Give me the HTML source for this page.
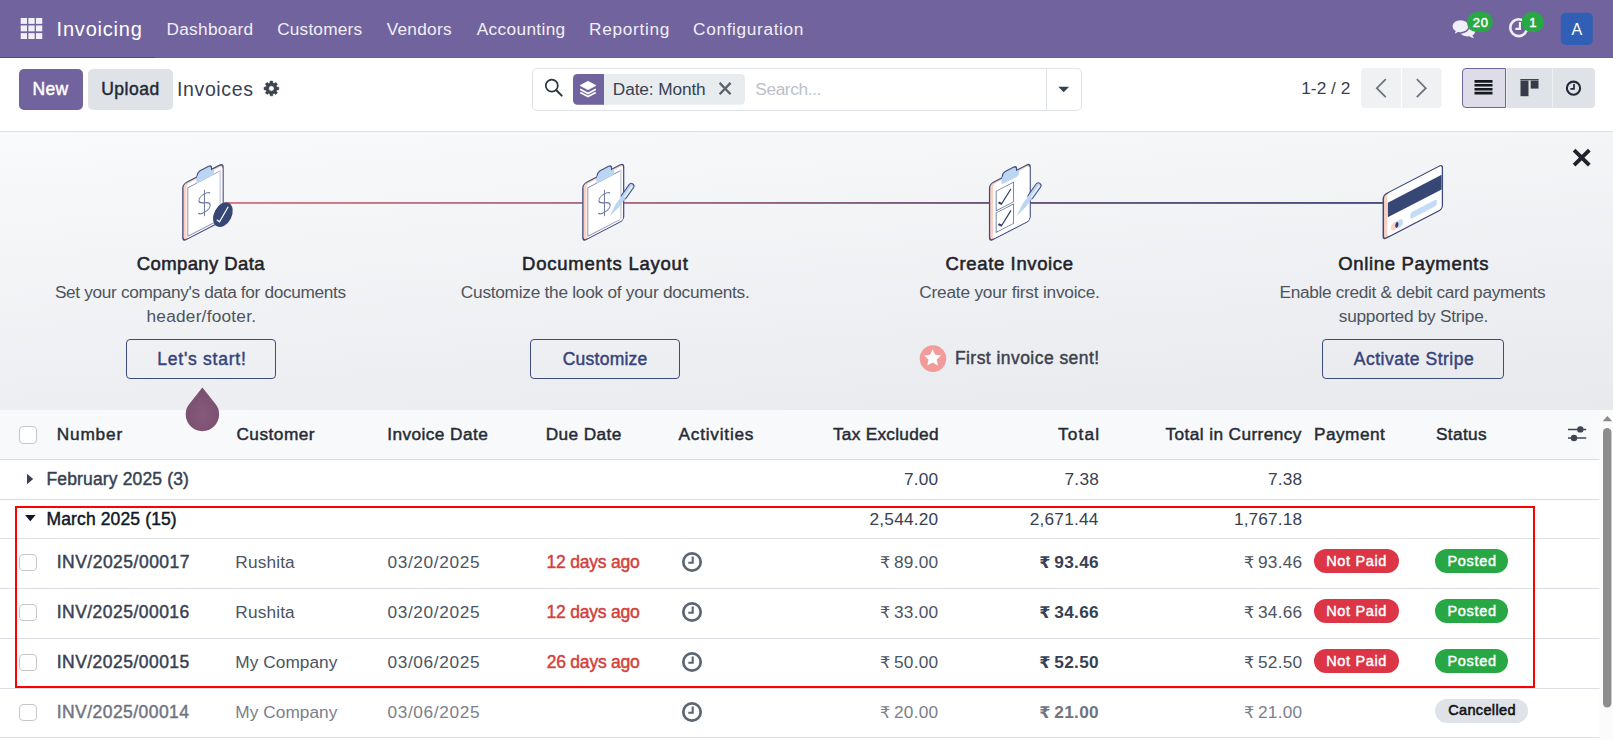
<!DOCTYPE html>
<html lang="en">
<head>
<meta charset="utf-8">
<title>Odoo - Invoices</title>
<style>
*{box-sizing:border-box;margin:0;padding:0}
html,body{width:1613px;height:740px;overflow:hidden;background:#fff}
body{font-family:"Liberation Sans",sans-serif;position:relative;color:#374151}
.sec{position:absolute;left:0;width:1613px}
.t{position:absolute;white-space:nowrap;line-height:1}
.abs{position:absolute}
#nav{top:0;height:58px;background:#71639e;border-bottom:1px solid #695c97}
#cp{top:58px;height:74px;background:#fff;border-bottom:1px solid #dce0e4}
#bn{top:132px;height:278px;background:linear-gradient(175.8deg,#f9fafb,#e7e9ed)}
#th{top:410px;height:50px;width:1600px;background:#f8f9fb;border-bottom:1px solid #d8dbe0}
.row{width:1600px;background:#fff;border-bottom:1px solid #dcdfe4}
.btn{position:absolute;border-radius:5px}
.cb{position:absolute;left:19px;width:18px;height:18px;border:1px solid #c6c7c9;border-radius:4px;background:#fff}
.badge{position:absolute;height:23.5px;border-radius:12px}
.ob{position:absolute;top:207px;height:40px;border:1px solid #3c4b80;border-radius:4px}
</style>
</head>
<body>

<!-- ================= NAVBAR ================= -->
<div class="sec" id="nav">
<svg class="abs" style="left:0;top:0" width="1613" height="58" viewBox="0 0 1613 58">
 <g fill="#f1eff7">
  <rect x="20.7" y="18" width="6.3" height="5.9"/><rect x="28.35" y="18" width="6.3" height="5.9"/><rect x="35.95" y="18" width="6.3" height="5.9"/>
  <rect x="20.7" y="25.45" width="6.3" height="5.9"/><rect x="28.35" y="25.45" width="6.3" height="5.9"/><rect x="35.95" y="25.45" width="6.3" height="5.9"/>
  <rect x="20.7" y="33.1" width="6.3" height="5.9"/><rect x="28.35" y="33.1" width="6.3" height="5.9"/><rect x="35.95" y="33.1" width="6.3" height="5.9"/>
 </g>
 <!-- messaging -->
 <g fill="#f0eef6">
  <path d="M1467.700 27c4.100 0 7.400 2.100 7.400 4.700 0 1.500-1.100 2.800-2.800 3.700 0.500 1 1.200 1.800 2.100 2.400-2 0-3.700-0.500-5-1.500-0.600 0.100-1.100 0.100-1.700 0.100-4.100 0-7.400-2.100-7.400-4.700s3.300-4.700 7.400-4.700z"/>
  <path stroke="#71639e" stroke-width="1.500" d="M1460.500 19.400c-4.800 0-8.700 3-8.700 6.800 0 2.100 1.200 3.900 3.100 5.200-0.300 1.200-1 2.200-2 3 2.200 0 4.100-0.600 5.600-1.700 0.600 0.100 1.300 0.200 2 0.200 4.800 0 8.700-3 8.700-6.700s-3.900-6.800-8.700-6.800z"/>
 </g>
 <rect x="1466.800" y="12" width="26.100" height="20.100" rx="10.050" fill="#28a745"/>
 <!-- activity clock -->
 <circle cx="1518.700" cy="27.700" r="8.450" fill="none" stroke="#f0eef6" stroke-width="2.600"/>
 <path d="M1519.900 22v6.800h-4.500" fill="none" stroke="#f0eef6" stroke-width="2.200"/>
 <rect x="1521.500" y="12" width="22.500" height="20.100" rx="10.050" fill="#28a745"/>
 <!-- avatar -->
 <rect x="1560.800" y="12.800" width="32" height="32.200" rx="5" fill="#305fb5"/>
</svg>
<div class="abs" style="left:0;top:57px;width:155px;height:1px;background:#54497f"></div>
<span class="t" style="left:56.55px;top:19.00px;font-size:20px;color:#fff;letter-spacing:0.800px;">Invoicing</span>
<span class="t" style="left:166.50px;top:21.00px;font-size:17.25px;color:#f1eff7;letter-spacing:0.281px;">Dashboard</span>
<span class="t" style="left:277.15px;top:21.00px;font-size:17.25px;color:#f1eff7;letter-spacing:0.187px;">Customers</span>
<span class="t" style="left:386.65px;top:21.00px;font-size:17.25px;color:#f1eff7;letter-spacing:0.283px;">Vendors</span>
<span class="t" style="left:476.70px;top:21.00px;font-size:17.25px;color:#f1eff7;letter-spacing:0.350px;">Accounting</span>
<span class="t" style="left:589.00px;top:21.00px;font-size:17.25px;color:#f1eff7;letter-spacing:0.706px;">Reporting</span>
<span class="t" style="left:693.05px;top:21.00px;font-size:17.25px;color:#f1eff7;letter-spacing:0.646px;">Configuration</span>
<span class="t" style="left:1472.75px;top:15.50px;font-size:13px;-webkit-text-stroke:0.45px;color:#fff;letter-spacing:0.850px;">20</span>
<span class="t" style="left:1529.20px;top:15.50px;font-size:13px;-webkit-text-stroke:0.45px;color:#fff;letter-spacing:0.000px;">1</span>
<span class="t" style="left:1571.60px;top:22.00px;font-size:16px;color:#fff;letter-spacing:0.000px;">A</span>
</div>

<!-- ================= CONTROL PANEL ================= -->
<div class="sec" id="cp">
<div class="btn" style="left:19px;top:11px;width:64px;height:41px;background:#71639e"></div>
<div class="btn" style="left:88px;top:11px;width:85px;height:41px;background:#dfe2e6"></div>
<svg class="abs" style="left:0;top:0" width="1613" height="74" viewBox="0 58 1613 74">
 <!-- gear -->
 <path fill="#3b4350" fill-rule="evenodd" stroke="#3b4350" stroke-width="0.6" stroke-linejoin="round" d="M269.90 83.05L270.17 81.10L272.63 81.10L272.90 83.05L274.16 83.58L275.73 82.38L277.47 84.12L276.27 85.69L276.80 86.95L278.75 87.22L278.75 89.68L276.80 89.95L276.27 91.21L277.47 92.78L275.73 94.52L274.16 93.32L272.90 93.85L272.63 95.80L270.17 95.80L269.90 93.85L268.64 93.32L267.07 94.52L265.33 92.78L266.53 91.21L266.00 89.95L264.05 89.68L264.05 87.22L266.00 86.95L266.53 85.69L265.33 84.12L267.07 82.38L268.64 83.58ZM268.65 88.45a2.75 2.75 0 1 0 5.5 0a2.75 2.75 0 1 0 -5.5 0Z"/>
 <!-- search box -->
 <rect x="532.500" y="68.500" width="549" height="42" rx="4.500" fill="#fff" stroke="#dfe3e7"/>
 <path d="M1046.500 69v41" stroke="#dfe3e7"/>
 <circle cx="551.800" cy="85.700" r="6" fill="none" stroke="#2b3340" stroke-width="1.700"/>
 <path d="M556.300 90.300l5.400 5.300" stroke="#2b3340" stroke-width="2" stroke-linecap="round"/>
 <!-- facet -->
 <rect x="573" y="74" width="172" height="30.800" rx="4.500" fill="#e9ecef"/>
 <path d="M577.500 74h26.500v30.800h-26.500a4.500 4.500 0 0 1-4.500-4.500v-21.800a4.500 4.500 0 0 1 4.500-4.500z" fill="#71639e"/>
 <g fill="none" stroke="#fff" stroke-width="1.700">
  <path d="M588 81.200l8 4.300-8 4.300-8-4.300z" fill="#fff" stroke-width="0.600"/>
  <path d="M580.200 89.300l7.800 4.200 7.800-4.200"/>
  <path d="M580.200 92.400l7.800 4.200 7.800-4.200"/>
 </g>
 <path d="M719.600 82.900l11 11.400M730.600 82.900l-11 11.400" stroke="#59626e" stroke-width="2.300"/>
 <path d="M1058.300 86.800h10.800l-5.400 5.500z" fill="#374151"/>
 <!-- pager -->
 <path d="M1365 68h36v40h-36a4 4 0 0 1-4-4v-32a4 4 0 0 1 4-4z" fill="#f0f1f3"/>
 <path d="M1402 68h35.600a4 4 0 0 1 4 4v32a4 4 0 0 1-4 4h-35.600z" fill="#f0f1f3"/>
 <path d="M1385.800 79.200l-9 9 9 9M1416.800 79.200l9 9-9 9" fill="none" stroke="#6b7080" stroke-width="1.700"/>
 <!-- view switcher -->
 <path d="M1466 68.500h39.500v39h-39.500a3.500 3.500 0 0 1-3.500-3.500v-32a3.500 3.500 0 0 1 3.500-3.500z" fill="#dfdcea" stroke="#71639e"/>
 <rect x="1506.500" y="68" width="45.500" height="40" fill="#dfe2e6"/>
 <path d="M1552.500 68h38.500a4 4 0 0 1 4 4v32a4 4 0 0 1-4 4h-38.500z" fill="#dfe2e6"/>
 <path d="M1474.500 81.400h18M1474.500 85.300h18M1474.500 89.200h18M1474.500 93.100h18" stroke="#15181e" stroke-width="2.600"/>
 <path d="M1520.300 79.700h18.400" stroke="#1f2937" stroke-width="1.100"/>
 <rect x="1520.500" y="80.600" width="8" height="15.600" fill="#343b49"/><rect x="1530.700" y="80.600" width="7.800" height="8" fill="#343b49"/>
 <circle cx="1573.500" cy="88.200" r="6.600" fill="none" stroke="#1f2937" stroke-width="2.100"/>
 <path d="M1574 84v4.800h-3.600" fill="none" stroke="#1f2937" stroke-width="1.700"/>
</svg>
<span class="t" style="left:32.40px;top:23.00px;font-size:17.5px;-webkit-text-stroke:0.45px;color:#fff;letter-spacing:0.350px;">New</span>
<span class="t" style="left:101.15px;top:23.00px;font-size:17.5px;-webkit-text-stroke:0.45px;color:#1f2937;letter-spacing:0.520px;">Upload</span>
<span class="t" style="left:176.95px;top:22.00px;font-size:19.5px;color:#374151;letter-spacing:0.643px;">Invoices</span>
<span class="t" style="left:612.80px;top:23.00px;font-size:17.25px;color:#374151;letter-spacing:-0.105px;">Date: Month</span>
<span class="t" style="left:755.35px;top:23.00px;font-size:17.25px;color:#bcc0c9;letter-spacing:-0.394px;">Search...</span>
<span class="t" style="left:1301.25px;top:22.00px;font-size:17.25px;color:#374151;letter-spacing:0.025px;">1-2 / 2</span>
</div>

<!-- ================= ONBOARDING BANNER ================= -->
<div class="sec" id="bn">
<svg class="abs" style="left:0;top:0" width="1613" height="278" viewBox="0 132 1613 278">
 <defs>
  <linearGradient id="ln" gradientUnits="userSpaceOnUse" x1="228" y1="0" x2="1383" y2="0">
   <stop offset="0" stop-color="#d0697a"/><stop offset="0.35" stop-color="#9c5d77"/><stop offset="0.68" stop-color="#5a4369"/><stop offset="1" stop-color="#333c6c"/>
  </linearGradient>
 </defs>
 <rect x="226" y="202.100" width="1158" height="1.700" fill="url(#ln)"/>

 <!-- step 1 : clipboard + check -->
 <g transform="matrix(1,-0.52,0,1,182.85,184.3)">
  <rect x="0" y="0" width="40.2" height="57" rx="3.6" fill="#fad1c3" stroke="#3f4d80" stroke-width="1.3"/>
  <rect x="3.6" y="2.1" width="36" height="54.3" rx="2.4" fill="#fff"/>
  <rect x="36.3" y="5" width="2" height="49.5" fill="#d3d8e6"/>
  <rect x="5" y="6" width="31.4" height="48.6" fill="#fff"/>
  <path d="M5 54.6V6H36.4M5 54.6H36.4" fill="none" stroke="#7f8bb0" stroke-width="0.9"/>
  <path d="M14.3 1V-1.1Q14.3 -4.7 17.9 -4.7H25.1Q28.7 -4.7 28.7 -1.1V1" fill="#bcd6f2" stroke="#3f4d80" stroke-width="1.2"/>
  <path d="M14.3 -0.8H28.1V0.7H30.2Q31.2 0.7 31.2 1.7V4.4Q31.2 6.6 29 6.6H15.7Q13.5 6.6 13.5 4.4V0.7H14.3Z" fill="#bcd6f2"/>
  <g transform="translate(21.6,29.9) scale(1.1)" fill="none" stroke="#6a779e" stroke-width="0.9">
   <path d="M5-6.3C3.3-9-5-9.3-5-4.5C-5 0 5.2-0.500 5.2 4.5C5.2 9.6-3.7 9.4-5.6 6.300M0-12V12"/>
  </g>
 </g>
 <ellipse cx="222.9" cy="214.7" rx="8.8" ry="13.1" transform="rotate(27 222.9 214.7)" fill="#364775"/>
 <path d="M216.8 219.7l2.700 2.100 8.700-15.100" fill="none" stroke="#fff" stroke-width="1.2"/>

 <!-- step 2 : clipboard + pen -->
 <g transform="matrix(1,-0.52,0,1,582.85,184.3)">
  <rect x="0" y="0" width="40.8" height="57" rx="3.6" fill="#fad1c3" stroke="#3f4d80" stroke-width="1.3"/>
  <rect x="3.6" y="2.1" width="36.6" height="54.3" rx="2.4" fill="#fff"/>
  <rect x="36.9" y="5" width="2" height="49.5" fill="#d3d8e6"/>
  <rect x="5" y="6" width="32" height="48.6" fill="#fff"/>
  <path d="M5 54.6V6H37M5 54.6H37" fill="none" stroke="#7f8bb0" stroke-width="0.9"/>
  <path d="M14.3 1V-1.1Q14.3 -4.7 17.9 -4.7H25.1Q28.7 -4.7 28.7 -1.1V1" fill="#bcd6f2" stroke="#3f4d80" stroke-width="1.2"/>
  <path d="M14.3 -0.8H28.1V0.7H30.2Q31.2 0.7 31.2 1.7V4.4Q31.2 6.6 29 6.6H15.7Q13.5 6.6 13.5 4.4V0.7H14.3Z" fill="#bcd6f2"/>
  <g transform="translate(21.6,29.9) scale(1.1)" fill="none" stroke="#6a779e" stroke-width="0.9">
   <path d="M5-6.3C3.3-9-5-9.3-5-4.5C-5 0 5.2-0.500 5.2 4.5C5.2 9.6-3.7 9.4-5.6 6.300M0-12V12"/>
  </g>
 </g>
 <path d="M624.2 196.1L631.3 186.2" stroke="#3f4d80" stroke-width="6.4" stroke-linecap="round"/>
 <path d="M609.8 216.2L619.1 207.0L633.1 187.5A2.2 2.2 0 0 0 629.5 184.9L615.5 204.4Z" fill="#bcd6f2"/>
 <path d="M624.9 196.6L632.0 186.7" stroke="#eef4fc" stroke-width="1.3" stroke-linecap="round"/>

 <!-- step 3 : checklist + pen -->
 <g transform="matrix(1,-0.52,0,1,989.55,184.3)">
  <rect x="0" y="0" width="40.6" height="57" rx="3.6" fill="#fad1c3" stroke="#3f4d80" stroke-width="1.3"/>
  <rect x="3.6" y="2.1" width="36.4" height="54.3" rx="2.4" fill="#fff"/>
  <path d="M12.7 1V-1.1Q12.7 -4.7 16.3 -4.7H23.5Q27.1 -4.7 27.1 -1.1V1" fill="#bcd6f2" stroke="#3f4d80" stroke-width="1.2"/>
  <path d="M12.7 -0.8H26.5V0.7H28.6Q29.6 0.7 29.6 1.7V4.4Q29.6 6.6 27.4 6.6H14.1Q11.9 6.6 11.9 4.4V0.7H12.7Z" fill="#bcd6f2"/>
  <rect x="6.6" y="10.3" width="17.5" height="19.6" fill="#fff" stroke="#5a6894" stroke-width="0.8"/>
  <rect x="6.6" y="32" width="17.5" height="19.6" fill="#fff" stroke="#5a6894" stroke-width="0.8"/>
  <path d="M8.9 22.7l3.100 3.200l9.400-10.200M8.9 44.4l3.100 3.200l9.400-10.200" fill="none" stroke="#2f3d6d" stroke-width="1.6"/>
 </g>
 <path d="M1030.8 196.2L1038.3 185.6" stroke="#3f4d80" stroke-width="6.4" stroke-linecap="round"/>
 <path d="M1016.6 216.2L1026.0 206.8L1040.1 186.9A2.2 2.2 0 0 0 1036.5 184.3L1022.4 204.2Z" fill="#bcd6f2"/>
 <path d="M1031.5 196.7L1039.0 186.1" stroke="#eef4fc" stroke-width="1.3" stroke-linecap="round"/>

 <!-- step 4 : credit card -->
 <g transform="matrix(1,-0.52,0,1,1383.300,195.300)">
  <rect x="0" y="0" width="59" height="44.300" rx="3" fill="#fad1c3" stroke="#3d4b7e" stroke-width="1.500"/>
  <rect x="4" y="0.600" width="54.300" height="43" rx="2.300" fill="#fff"/>
  <rect x="4.500" y="9.800" width="53.800" height="14.600" fill="#364775"/>
  <rect x="27" y="31.500" width="26.500" height="6.600" rx="2" fill="#c3dcf5"/>
  <circle cx="15.800" cy="36.600" r="3.900" fill="#c3dcf5"/>
  <circle cx="11.300" cy="36.600" r="3.900" fill="#fbd5c9"/>
  <path d="M13.550 33.400a3.900 3.900 0 0 1 0 6.400a3.900 3.900 0 0 1 0-6.400z" fill="#2f3d6d"/>
 </g>

 <!-- close -->
 <path d="M1574.100 150.200l15.200 14.900M1589.300 150.200l-15.200 14.900" stroke="#20242a" stroke-width="3.900"/>
 <!-- star -->
 <circle cx="933" cy="358.600" r="13.300" fill="#f29b9b"/>
 <g transform="translate(932.600,358) scale(1.22)"><path d="M0-7.200l2.100 4.500 4.900 0.550-3.650 3.350 1 4.850-4.350-2.450-4.350 2.450 1-4.850-3.650-3.350 4.900-0.550z" fill="#fff"/></g>
</svg>
<div class="ob" style="left:126px;width:150px"></div>
<div class="ob" style="left:530px;width:150px"></div>
<div class="ob" style="left:1322px;width:182px"></div>
<span class="t" style="left:136.70px;top:123.00px;font-size:18.5px;-webkit-text-stroke:0.55px;color:#1f2329;letter-spacing:0.400px;">Company Data</span>
<span class="t" style="left:522.00px;top:123.00px;font-size:18.5px;-webkit-text-stroke:0.55px;color:#1f2329;letter-spacing:0.770px;">Documents Layout</span>
<span class="t" style="left:945.60px;top:123.00px;font-size:18.5px;-webkit-text-stroke:0.55px;color:#1f2329;letter-spacing:0.623px;">Create Invoice</span>
<span class="t" style="left:1338.15px;top:123.00px;font-size:18.5px;-webkit-text-stroke:0.55px;color:#1f2329;letter-spacing:0.671px;">Online Payments</span>
<span class="t" style="left:54.95px;top:152.00px;font-size:17.25px;color:#4d545d;letter-spacing:-0.342px;">Set your company's data for documents</span>
<span class="t" style="left:146.55px;top:176.00px;font-size:17.25px;color:#4d545d;letter-spacing:0.227px;">header/footer.</span>
<span class="t" style="left:460.85px;top:152.00px;font-size:17.25px;color:#4d545d;letter-spacing:-0.257px;">Customize the look of your documents.</span>
<span class="t" style="left:919.35px;top:152.00px;font-size:17.25px;color:#4d545d;letter-spacing:-0.218px;">Create your first invoice.</span>
<span class="t" style="left:1279.60px;top:152.00px;font-size:17.25px;color:#4d545d;letter-spacing:-0.326px;">Enable credit &amp; debit card payments</span>
<span class="t" style="left:1338.80px;top:176.00px;font-size:17.25px;color:#4d545d;letter-spacing:-0.255px;">supported by Stripe.</span>
<span class="t" style="left:157.30px;top:219.00px;font-size:17.5px;-webkit-text-stroke:0.45px;color:#34447a;letter-spacing:0.755px;">Let's start!</span>
<span class="t" style="left:562.70px;top:219.00px;font-size:17.5px;-webkit-text-stroke:0.45px;color:#34447a;letter-spacing:0.250px;">Customize</span>
<span class="t" style="left:1353.80px;top:219.00px;font-size:17.5px;-webkit-text-stroke:0.45px;color:#34447a;letter-spacing:0.507px;">Activate Stripe</span>
<span class="t" style="left:954.90px;top:218.00px;font-size:17.5px;-webkit-text-stroke:0.45px;color:#3b424d;letter-spacing:0.450px;">First invoice sent!</span>
</div>

<!-- ================= LIST ================= -->
<div class="sec" id="th">
<div class="cb" style="left:19.25px;top:16px;width:17.5px;height:17.5px"></div>
<svg class="abs" style="left:1564px;top:12px" width="28" height="26" viewBox="1564 422 28 26">
 <path d="M1568 429.400h18.200M1568 438h18.200" stroke="#3f4652" stroke-width="1.500"/>
 <circle cx="1580.300" cy="429.400" r="3.200" fill="#3f4652"/><circle cx="1574" cy="438" r="3.200" fill="#3f4652"/>
</svg>
<span class="t" style="left:56.80px;top:16.00px;font-size:17.25px;-webkit-text-stroke:0.45px;color:#262b33;letter-spacing:0.800px;">Number</span>
<span class="t" style="left:236.45px;top:16.00px;font-size:17.25px;-webkit-text-stroke:0.45px;color:#262b33;letter-spacing:0.479px;">Customer</span>
<span class="t" style="left:387.30px;top:16.00px;font-size:17.25px;-webkit-text-stroke:0.45px;color:#262b33;letter-spacing:0.414px;">Invoice Date</span>
<span class="t" style="left:545.70px;top:16.00px;font-size:17.25px;-webkit-text-stroke:0.45px;color:#262b33;letter-spacing:0.386px;">Due Date</span>
<span class="t" style="left:678.60px;top:16.00px;font-size:17.25px;-webkit-text-stroke:0.45px;color:#262b33;letter-spacing:0.756px;">Activities</span>
<span class="t" style="left:832.90px;top:16.00px;font-size:17.25px;-webkit-text-stroke:0.45px;color:#262b33;letter-spacing:0.282px;">Tax Excluded</span>
<span class="t" style="left:1058.00px;top:16.00px;font-size:17.25px;-webkit-text-stroke:0.45px;color:#262b33;letter-spacing:1.188px;">Total</span>
<span class="t" style="left:1165.60px;top:16.00px;font-size:17.25px;-webkit-text-stroke:0.45px;color:#262b33;letter-spacing:0.394px;">Total in Currency</span>
<span class="t" style="left:1313.95px;top:16.00px;font-size:17.25px;-webkit-text-stroke:0.45px;color:#262b33;letter-spacing:0.475px;">Payment</span>
<span class="t" style="left:1435.95px;top:16.00px;font-size:17.25px;-webkit-text-stroke:0.45px;color:#262b33;letter-spacing:0.370px;">Status</span>
</div>
<div class="sec row" id="g1" style="top:460px;height:40px"><svg class="abs" style="left:24px;top:10px" width="14" height="18" viewBox="24 470 14 18"><path d="M27 473.800l6.200 5.200-6.200 5.200z" fill="#374151"/></svg>
<span class="t" style="left:46.50px;top:11.00px;font-size:17.5px;-webkit-text-stroke:0.45px;color:#374151;letter-spacing:0.144px;">February 2025 (3)</span>
<span class="t" style="left:904.05px;top:11.00px;font-size:17.25px;color:#374151;letter-spacing:0.150px;">7.00</span>
<span class="t" style="left:1064.55px;top:11.00px;font-size:17.25px;color:#374151;letter-spacing:0.233px;">7.38</span>
<span class="t" style="left:1267.95px;top:11.00px;font-size:17.25px;color:#374151;letter-spacing:0.233px;">7.38</span></div>
<div class="sec row" id="g2" style="top:500px;height:39px"><svg class="abs" style="left:22px;top:11px" width="18" height="14" viewBox="22 511 18 14"><path d="M25 515h10.600l-5.300 6.300z" fill="#111827"/></svg>
<span class="t" style="left:46.50px;top:11.00px;font-size:17.5px;-webkit-text-stroke:0.45px;color:#111827;letter-spacing:0.129px;">March 2025 (15)</span>
<span class="t" style="left:869.55px;top:11.00px;font-size:17.25px;color:#374151;letter-spacing:0.207px;">2,544.20</span>
<span class="t" style="left:1029.75px;top:11.00px;font-size:17.25px;color:#374151;letter-spacing:0.214px;">2,671.44</span>
<span class="t" style="left:1233.95px;top:11.00px;font-size:17.25px;color:#374151;letter-spacing:0.136px;">1,767.18</span></div>
<div class="sec row" id="r1" style="top:539px;height:50px"><div class="cb" style="left:19.25px;top:15.250px;width:17.5px;height:17px"></div>
<svg class="abs" style="left:679px;top:10px" width="26" height="26" viewBox="-13 -13 26 26"><circle r="8.700" fill="none" stroke="#5c6673" stroke-width="2.700"/><path d="M0.700-5.400v6.200h-4.400" fill="none" stroke="#5c6673" stroke-width="2.100"/></svg>
<div class="badge" style="left:1313.750px;top:10.250px;width:85px;background:#dc3545"></div>
<div class="badge" style="left:1435px;top:10.250px;width:73px;background:#28a745"></div>
<span class="t" style="left:56.70px;top:15.00px;font-size:17.5px;-webkit-text-stroke:0.45px;color:#374151;letter-spacing:0.488px;">INV/2025/00017</span>
<span class="t" style="left:235.35px;top:15.00px;font-size:17.25px;color:#4b5563;letter-spacing:0.142px;">Rushita</span>
<span class="t" style="left:387.45px;top:15.00px;font-size:17.25px;color:#4b5563;letter-spacing:0.644px;">03/20/2025</span>
<span class="t" style="left:546.45px;top:15.00px;font-size:17.5px;-webkit-text-stroke:0.45px;color:#d23f3a;letter-spacing:-0.195px;">12 days ago</span>
<span class="t" style="left:879.90px;top:16.00px;font-size:16px;color:#4b5563;letter-spacing:0.000px;font-family:'DejaVu Sans', sans-serif;">₹</span>
<span class="t" style="left:893.95px;top:15.00px;font-size:17.25px;color:#4b5563;letter-spacing:0.262px;">89.00</span>
<span class="t" style="left:1039.30px;top:16.00px;font-size:16px;font-weight:bold;color:#374151;letter-spacing:0.000px;font-family:'DejaVu Sans', sans-serif;">₹</span>
<span class="t" style="left:1054.30px;top:15.00px;font-size:17.25px;font-weight:bold;color:#374151;letter-spacing:0.300px;">93.46</span>
<span class="t" style="left:1243.90px;top:16.00px;font-size:16px;color:#4b5563;letter-spacing:0.000px;font-family:'DejaVu Sans', sans-serif;">₹</span>
<span class="t" style="left:1258.05px;top:15.00px;font-size:17.25px;color:#4b5563;letter-spacing:0.213px;">93.46</span>
<span class="t" style="left:1326.20px;top:15.00px;font-size:14.5px;-webkit-text-stroke:0.45px;color:#fff;letter-spacing:0.657px;">Not Paid</span>
<span class="t" style="left:1447.45px;top:15.00px;font-size:14.5px;-webkit-text-stroke:0.45px;color:#fff;letter-spacing:0.720px;">Posted</span></div>
<div class="sec row" id="r2" style="top:589px;height:50px"><div class="cb" style="left:19.25px;top:15.250px;width:17.5px;height:17px"></div>
<svg class="abs" style="left:679px;top:10px" width="26" height="26" viewBox="-13 -13 26 26"><circle r="8.700" fill="none" stroke="#5c6673" stroke-width="2.700"/><path d="M0.700-5.400v6.200h-4.400" fill="none" stroke="#5c6673" stroke-width="2.100"/></svg>
<div class="badge" style="left:1313.750px;top:10.250px;width:85px;background:#dc3545"></div>
<div class="badge" style="left:1435px;top:10.250px;width:73px;background:#28a745"></div>
<span class="t" style="left:56.70px;top:15.00px;font-size:17.5px;-webkit-text-stroke:0.45px;color:#374151;letter-spacing:0.469px;">INV/2025/00016</span>
<span class="t" style="left:235.35px;top:15.00px;font-size:17.25px;color:#4b5563;letter-spacing:0.142px;">Rushita</span>
<span class="t" style="left:387.45px;top:15.00px;font-size:17.25px;color:#4b5563;letter-spacing:0.644px;">03/20/2025</span>
<span class="t" style="left:546.45px;top:15.00px;font-size:17.5px;-webkit-text-stroke:0.45px;color:#d23f3a;letter-spacing:-0.195px;">12 days ago</span>
<span class="t" style="left:879.90px;top:16.00px;font-size:16px;color:#4b5563;letter-spacing:0.000px;font-family:'DejaVu Sans', sans-serif;">₹</span>
<span class="t" style="left:893.95px;top:15.00px;font-size:17.25px;color:#4b5563;letter-spacing:0.262px;">33.00</span>
<span class="t" style="left:1039.30px;top:16.00px;font-size:16px;font-weight:bold;color:#374151;letter-spacing:0.000px;font-family:'DejaVu Sans', sans-serif;">₹</span>
<span class="t" style="left:1054.30px;top:15.00px;font-size:17.25px;font-weight:bold;color:#374151;letter-spacing:0.300px;">34.66</span>
<span class="t" style="left:1243.90px;top:16.00px;font-size:16px;color:#4b5563;letter-spacing:0.000px;font-family:'DejaVu Sans', sans-serif;">₹</span>
<span class="t" style="left:1258.05px;top:15.00px;font-size:17.25px;color:#4b5563;letter-spacing:0.213px;">34.66</span>
<span class="t" style="left:1326.20px;top:15.00px;font-size:14.5px;-webkit-text-stroke:0.45px;color:#fff;letter-spacing:0.657px;">Not Paid</span>
<span class="t" style="left:1447.45px;top:15.00px;font-size:14.5px;-webkit-text-stroke:0.45px;color:#fff;letter-spacing:0.720px;">Posted</span></div>
<div class="sec row" id="r3" style="top:639px;height:50px"><div class="cb" style="left:19.25px;top:15.250px;width:17.5px;height:17px"></div>
<svg class="abs" style="left:679px;top:10px" width="26" height="26" viewBox="-13 -13 26 26"><circle r="8.700" fill="none" stroke="#5c6673" stroke-width="2.700"/><path d="M0.700-5.400v6.200h-4.400" fill="none" stroke="#5c6673" stroke-width="2.100"/></svg>
<div class="badge" style="left:1313.750px;top:10.250px;width:85px;background:#dc3545"></div>
<div class="badge" style="left:1435px;top:10.250px;width:73px;background:#28a745"></div>
<span class="t" style="left:56.70px;top:15.00px;font-size:17.5px;-webkit-text-stroke:0.45px;color:#374151;letter-spacing:0.469px;">INV/2025/00015</span>
<span class="t" style="left:235.35px;top:15.00px;font-size:17.25px;color:#4b5563;letter-spacing:0.039px;">My Company</span>
<span class="t" style="left:387.45px;top:15.00px;font-size:17.25px;color:#4b5563;letter-spacing:0.644px;">03/06/2025</span>
<span class="t" style="left:546.70px;top:15.00px;font-size:17.5px;-webkit-text-stroke:0.45px;color:#d23f3a;letter-spacing:-0.220px;">26 days ago</span>
<span class="t" style="left:879.90px;top:16.00px;font-size:16px;color:#4b5563;letter-spacing:0.000px;font-family:'DejaVu Sans', sans-serif;">₹</span>
<span class="t" style="left:893.95px;top:15.00px;font-size:17.25px;color:#4b5563;letter-spacing:0.262px;">50.00</span>
<span class="t" style="left:1039.30px;top:16.00px;font-size:16px;font-weight:bold;color:#374151;letter-spacing:0.000px;font-family:'DejaVu Sans', sans-serif;">₹</span>
<span class="t" style="left:1054.30px;top:15.00px;font-size:17.25px;font-weight:bold;color:#374151;letter-spacing:0.300px;">52.50</span>
<span class="t" style="left:1243.90px;top:16.00px;font-size:16px;color:#4b5563;letter-spacing:0.000px;font-family:'DejaVu Sans', sans-serif;">₹</span>
<span class="t" style="left:1258.05px;top:15.00px;font-size:17.25px;color:#4b5563;letter-spacing:0.213px;">52.50</span>
<span class="t" style="left:1326.20px;top:15.00px;font-size:14.5px;-webkit-text-stroke:0.45px;color:#fff;letter-spacing:0.657px;">Not Paid</span>
<span class="t" style="left:1447.45px;top:15.00px;font-size:14.5px;-webkit-text-stroke:0.45px;color:#fff;letter-spacing:0.720px;">Posted</span></div>
<div class="sec row" id="r4" style="top:689px;height:49px"><div class="cb" style="left:19.25px;top:15.250px;width:17.5px;height:17px"></div>
<svg class="abs" style="left:679px;top:10px" width="26" height="26" viewBox="-13 -13 26 26"><circle r="8.700" fill="none" stroke="#5c6673" stroke-width="2.700"/><path d="M0.700-5.400v6.200h-4.400" fill="none" stroke="#5c6673" stroke-width="2.100"/></svg>
<div class="badge" style="left:1435px;top:10px;width:93px;height:23.750px;background:#dfe2e6"></div>
<span class="t" style="left:56.70px;top:15.00px;font-size:17.5px;-webkit-text-stroke:0.45px;color:#6f7480;letter-spacing:0.450px;">INV/2025/00014</span>
<span class="t" style="left:235.35px;top:15.00px;font-size:17.25px;color:#7c808b;letter-spacing:0.039px;">My Company</span>
<span class="t" style="left:387.45px;top:15.00px;font-size:17.25px;color:#7c808b;letter-spacing:0.644px;">03/06/2025</span>
<span class="t" style="left:879.90px;top:16.00px;font-size:16px;color:#7c808b;letter-spacing:0.000px;font-family:'DejaVu Sans', sans-serif;">₹</span>
<span class="t" style="left:893.95px;top:15.00px;font-size:17.25px;color:#7c808b;letter-spacing:0.262px;">20.00</span>
<span class="t" style="left:1039.30px;top:16.00px;font-size:16px;font-weight:bold;color:#6f7480;letter-spacing:0.000px;font-family:'DejaVu Sans', sans-serif;">₹</span>
<span class="t" style="left:1054.30px;top:15.00px;font-size:17.25px;font-weight:bold;color:#6f7480;letter-spacing:0.300px;">21.00</span>
<span class="t" style="left:1243.90px;top:16.00px;font-size:16px;color:#7c808b;letter-spacing:0.000px;font-family:'DejaVu Sans', sans-serif;">₹</span>
<span class="t" style="left:1258.05px;top:15.00px;font-size:17.25px;color:#7c808b;letter-spacing:0.213px;">21.00</span>
<span class="t" style="left:1448.25px;top:14.00px;font-size:14.5px;-webkit-text-stroke:0.55px;color:#111;letter-spacing:0.338px;">Cancelled</span></div>

<!-- scrollbar -->
<svg class="abs" style="left:1599px;top:410px" width="14" height="330" viewBox="1599 410 14 330">
 <rect x="1599.500" y="410" width="13.500" height="330" fill="#fbfbfb"/>
 <path d="M1602.700 421.200h9.400l-4.700-5.300z" fill="#8a8a8a"/>
 <rect x="1603" y="428" width="8.400" height="279.600" rx="4.200" fill="#8d8d8d"/>
</svg>
<!-- tour pointer -->
<svg class="abs" style="left:180px;top:384px" width="46" height="52" viewBox="180 384 46 52">
 <defs><radialGradient id="dg" cx="0.5" cy="0.62" r="0.55"><stop offset="0" stop-color="#875a7b"/><stop offset="1" stop-color="#7a4f6f"/></radialGradient></defs>
 <path d="M202.400 387.400L215.100 403.600A16.700 16.700 0 1 1 189.700 403.600Z" fill="url(#dg)"/>
</svg>
<!-- highlight -->
<div class="abs" style="left:15px;top:506px;width:1520px;height:182px;border:2px solid #ff0000"></div>

</body>
</html>
